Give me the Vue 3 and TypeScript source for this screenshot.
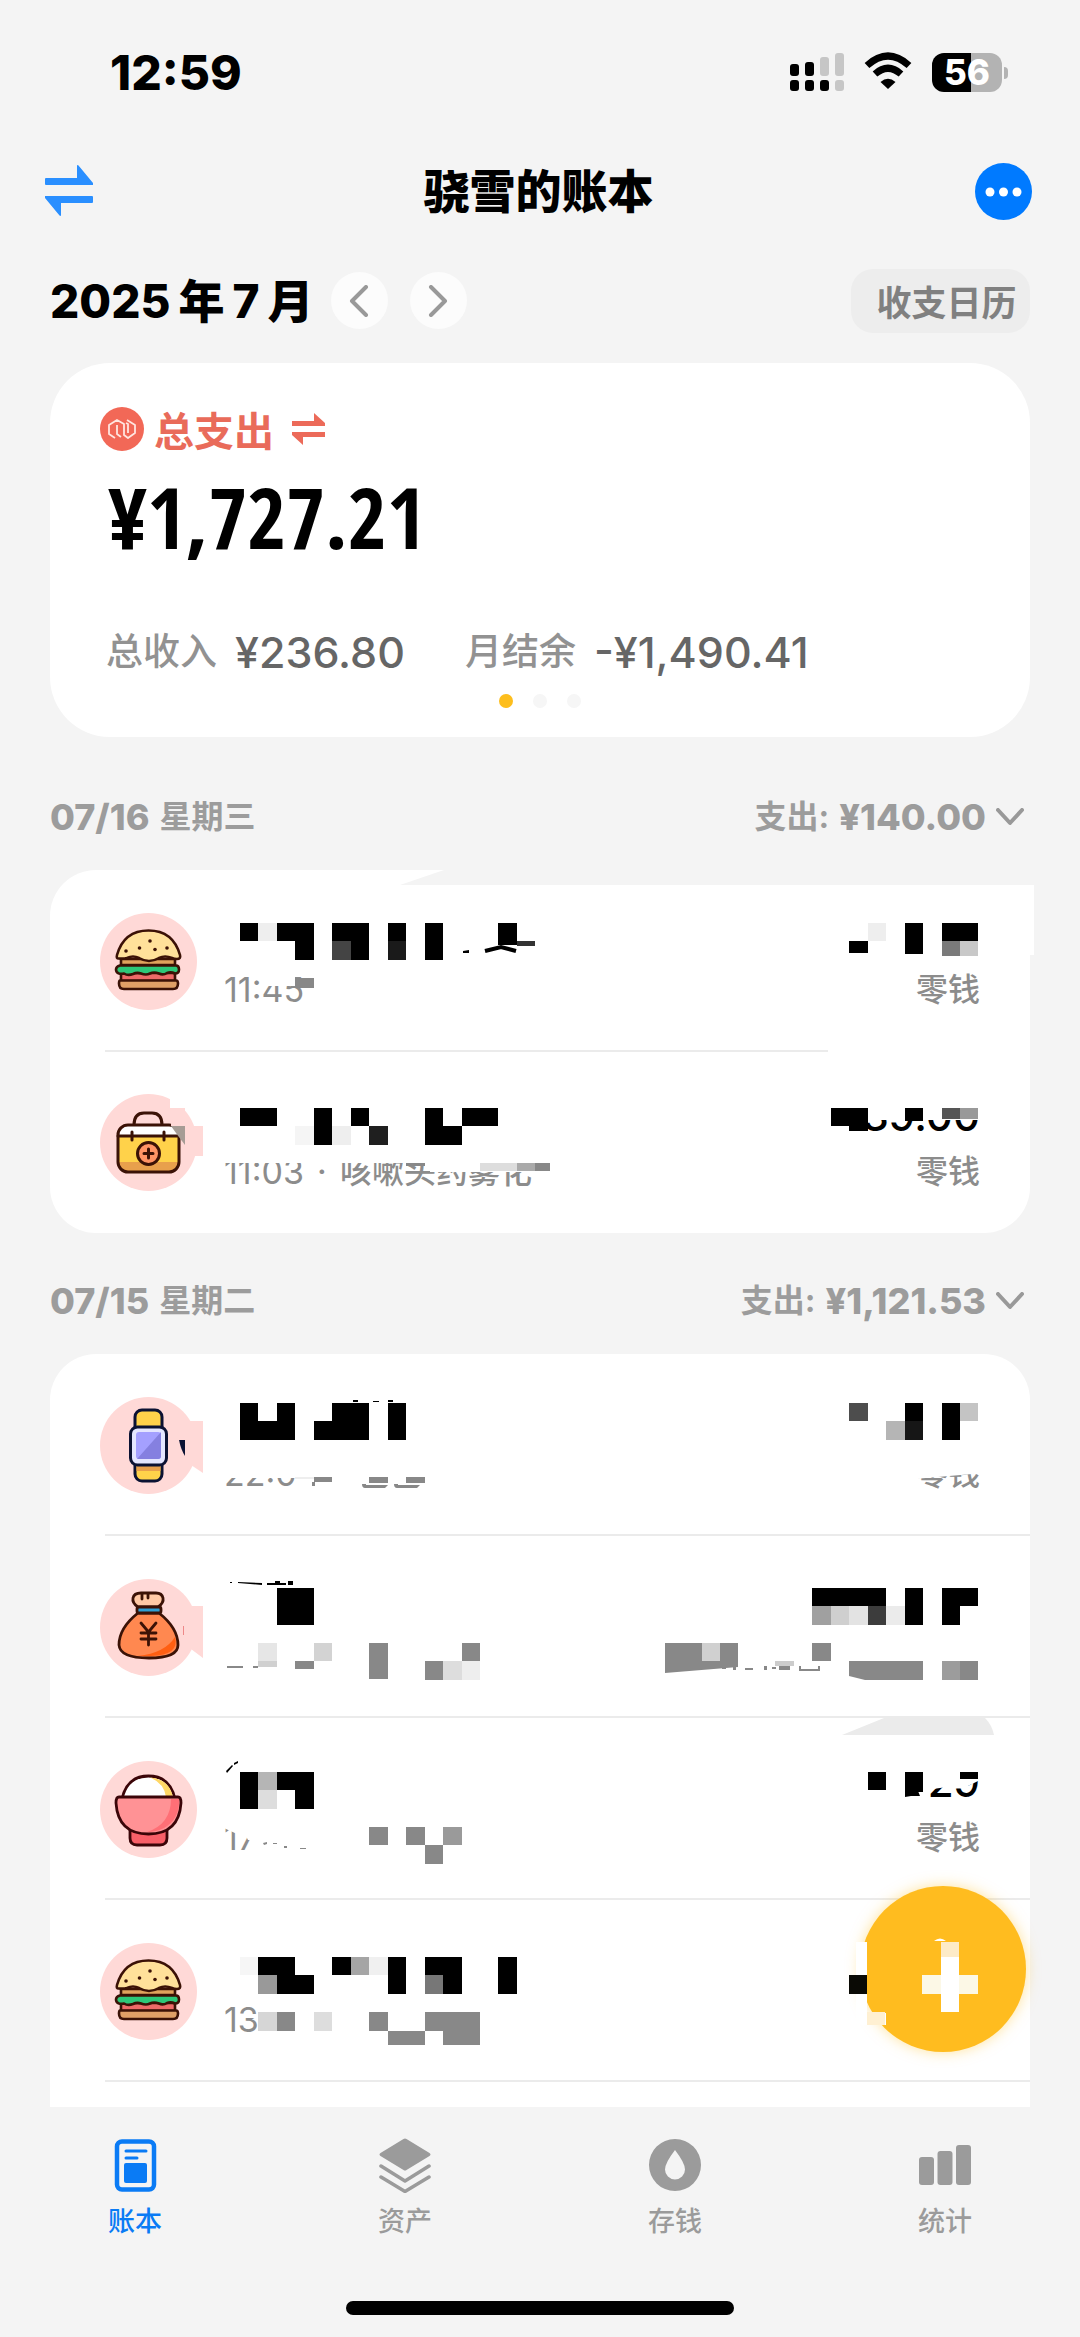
<script setup lang="ts">
import { ref } from 'vue'

type IconName = 'burger' | 'medkit' | 'watch' | 'moneybag' | 'bowl'
/** column, top, columns wide, height, fill */
type Block = [number, number, number, number, string]
/** path data, fill, stroke */
type Mark = { d: string; fill?: string; stroke?: string }

interface Entry {
  icon: IconName
  time?: string
  memo?: string
  amount?: string
  account?: string
  left: Block[]
  right: Block[]
  leftMarks?: Mark[]
  rightMarks?: Mark[]
  leftCover?: string
  rightCover?: string
}

interface DayGroup {
  date: string
  weekday: string
  total: string
  torn?: boolean
  open?: boolean
  entries: Entry[]
}

const K = '#000'
const G = '#888'
const P = '#ffd9d7'

const CELL = 240 / 13
const LEFT_ORIGIN = 50
const RIGHT_ORIGIN = 550

function box(b: Block, origin: number) {
  const x = Math.round(b[0] * CELL)
  return { x: x - origin, y: b[1], width: Math.round((b[0] + b[2]) * CELL) - x, height: b[3], fill: b[4] }
}

const groups: DayGroup[] = [
  {
    date: '07/16',
    weekday: '星期三',
    total: '¥140.00',
    torn: true,
    entries: [
      {
        icon: 'burger',
        time: '11:45',
        account: '零钱',
        leftCover: 'M216 100h29v16h-29z',
        left: [
          [13, 53, 1, 18, K], [14, 53, 1, 18, '#eee'], [15, 53, 2, 18, K], [16, 71, 1, 19, K],
          [18, 53, 2, 18, K], [18, 71, 1, 19, '#444'], [19, 71, 1, 19, K],
          [21, 53, 1, 18, K], [21, 71, 1, 19, '#1a1a1a'], [23, 53, 1, 37, K],
          [27, 53, 1, 22, K], [16, 108, 1, 10, G]
        ],
        leftMarks: [
          { d: 'M467 71h18v5h-18z', fill: '#333' },
          { d: 'M413 81l6-1v3h-6z', fill: K },
          { d: 'M435 81l16-4 15 4', stroke: K }
        ],
        rightCover: 'M278 178h202v6H278z',
        right: [
          [46, 71, 1, 12, K], [47, 53, 1, 18, '#eee'], [49, 53, 1, 31, K],
          [51, 53, 2, 18, K], [51, 71, 1, 15, '#7a7a7a'], [52, 71, 1, 15, '#c8c8c8']
        ]
      },
      {
        icon: 'medkit',
        time: '11:03',
        memo: '咳嗽头药雾化',
        amount: '-39.00',
        account: '零钱',
        leftCover: 'M120 46h16v10h-16zM170 100h210v11H170zM380 96h110v24H380z',
        left: [
          [13, 56, 2, 18, K], [17, 56, 1, 37, K], [16, 74, 1, 19, '#f5f5f5'], [18, 74, 1, 19, '#eee'],
          [19, 56, 1, 18, K], [20, 74, 1, 19, '#1f1f1f'], [23, 56, 1, 18, K], [23, 74, 2, 19, K],
          [25, 56, 2, 18, K], [22, 111, 1, 3, G], [26, 111, 2, 8, '#ddd'],
          [28, 111, 1, 8, '#aaa'], [29, 111, 1, 8, G], [10, 74, 1, 30, P]
        ],
        leftMarks: [
          { d: 'M121 56h14v18h-14z', fill: P },
          { d: 'M121 74h14v19q-7-9-14-19z', fill: '#a69c95' }
        ],
        rightCover: 'M270 40h170v28H270z',
        right: [
          [45, 56, 2, 18, K], [46, 74, 1, 5, K], [49, 56, 1, 13, K],
          [51, 56, 1, 11, '#555'], [52, 56, 1, 11, '#999']
        ]
      }
    ]
  },
  {
    date: '07/15',
    weekday: '星期二',
    total: '¥1,121.53',
    open: true,
    entries: [
      {
        icon: 'watch',
        time: '22:0',
        account: '零钱',
        leftCover: 'M170 96h80v28h-80z',
        left: [
          [13, 49, 1, 18, K], [15, 49, 1, 18, K], [13, 67, 3, 19, K], [17, 67, 1, 19, K],
          [18, 49, 2, 37, K], [21, 49, 1, 37, K], [16, 123, 1, 2, '#eee'], [17, 123, 1, 5, G],
          [20, 123, 1, 6, G], [22, 123, 1, 6, G]
        ],
        leftMarks: [
          { d: 'M135 67h18v52l-12-8h-6z', fill: P },
          { d: 'M129 86h6v16q-4-6-6-16z', fill: '#0b1233' },
          { d: 'M303 46h5v2h-5zM323 47h6v1h-6zM338 46h5v2h-5z', fill: K },
          { d: 'M262 128h3v4h-3zM312 130h4v1h22l-3 3h-20q-3 0-3-4zM344 130h4v1h22l-3 3h-20q-3 0-3-4z', fill: G }
        ],
        rightCover: 'M360 98h74v21l-70 6z',
        right: [
          [46, 49, 1, 18, '#4d4d4d'], [48, 67, 1, 19, '#b5b5b5'], [49, 49, 1, 18, K],
          [49, 67, 1, 19, '#161616'], [51, 49, 1, 37, K], [52, 49, 1, 18, '#c4c4c4']
        ]
      },
      {
        icon: 'moneybag',
        left: [
          [15, 52, 2, 37, K], [14, 107, 1, 18, '#e6e6e6'], [14, 125, 1, 6, '#d0d0d0'],
          [17, 107, 1, 18, '#d3d3d3'], [16, 125, 1, 8, G], [20, 107, 1, 36, G],
          [25, 107, 1, 18, G], [23, 125, 1, 19, G], [24, 125, 1, 19, '#ddd'], [25, 125, 1, 19, '#eee']
        ],
        leftMarks: [
          { d: 'M135 70h18v52l-12-9h-6z', fill: P },
          { d: 'M188 46l24 1v2l-24-2zM217 47h19v2h-19zM225 45h5v3h-5zM238 45h5v4h-5zM180 46h2v1h-2z', fill: K },
          { d: 'M177 130h16v2h-16zM203 130h5v2h-5z', fill: G },
          { d: 'M133 90h1v9h-1z', fill: '#e88' }
        ],
        right: [
          [44, 52, 4, 18, K], [44, 70, 1, 19, '#a0a0a0'], [45, 70, 1, 19, '#cfcfcf'],
          [46, 70, 1, 19, '#e3e3e3'], [47, 70, 1, 19, '#3c3c3c'], [48, 70, 1, 19, '#ebebeb'],
          [49, 52, 1, 37, K], [51, 52, 2, 18, K], [51, 70, 1, 19, K],
          [36, 107, 2, 18, G], [38, 107, 1, 18, '#d0d0d0'], [39, 107, 1, 18, G],
          [44, 107, 1, 18, G], [42, 125, 1, 5, '#ccc'],
          [51, 125, 1, 19, '#9c9c9c'], [52, 125, 1, 19, G]
        ],
        rightMarks: [
          { d: 'M115 125h73v6l-73 6zM299 125h74v19h-58l-16-4z', fill: G },
          { d: 'M172 131h4v2h-4zM183 130h3v4h-3zM195 132h8v2h-8zM214 130h3v4h-3zM222 131h4v2h-4zM229 130h11v4h-11zM249 130h2v3h17v-3h2v5h-21z', fill: G }
        ]
      },
      {
        icon: 'bowl',
        time: '17',
        amount: '29',
        account: '零钱',
        leftCover: 'M176 106h20v14l-20-9zM190 106h26v16h-18z',
        left: [
          [13, 54, 1, 37, K], [14, 54, 1, 18, '#b5b5b5'], [14, 72, 1, 19, '#ddd'],
          [15, 54, 2, 18, K], [16, 72, 1, 19, K], [20, 109, 1, 18, G], [22, 109, 1, 18, G],
          [24, 109, 1, 18, '#9a9a9a'], [23, 127, 1, 19, G]
        ],
        leftMarks: [
          { d: 'M176 53l6-6 1 1-6 7zM184 45l4-2v2l-4 2z', fill: K },
          { d: 'M213 125l4-1v2l-3 1zM223 125h4v1h-4zM234 128h3v2h-3zM250 130h6v1h-6z', fill: G }
        ],
        rightCover: 'M370 42h66v17l-22 11-10-2-28 4z',
        right: [[47, 54, 1, 18, K], [49, 54, 1, 20, K], [52, 54, 1, 7, K]],
        rightMarks: [
          { d: 'M292 17l42-17h101q7 7 9 17z', fill: '#ebebeb' },
          { d: 'M355 73h13l2 5h-9l-6 1z', fill: K }
        ]
      },
      {
        icon: 'burger',
        time: '13',
        leftCover: 'M197 114h12v4h-12z',
        left: [
          [13, 57, 1, 18, '#f6f6f6'], [14, 57, 2, 18, K], [14, 75, 1, 19, '#999'], [15, 75, 2, 19, K],
          [18, 57, 1, 18, K], [19, 57, 1, 18, '#a5a5a5'], [20, 57, 1, 18, '#f0f0f0'], [21, 57, 1, 37, K],
          [23, 57, 2, 18, K], [23, 75, 1, 19, '#777'], [24, 75, 1, 19, K], [27, 57, 1, 37, K],
          [14, 112, 1, 19, '#d6d6d6'], [15, 112, 1, 19, G], [17, 112, 1, 19, '#ddd'],
          [20, 112, 1, 19, G], [21, 131, 2, 14, G], [23, 112, 3, 19, G], [24, 131, 2, 14, G]
        ],
        right: []
      }
    ]
  }
]

const tabs = ['账本', '资产', '存钱', '统计']
const activeTab = ref(0)
const page = ref(0)
</script>

<template>
  <div class="app">
    <header>
      <div class="status">
        <span class="clock">12:59</span>
        <div class="status-icons">
          <svg width="54" height="40" viewBox="0 0 54 40" aria-hidden="true">
            <g fill="#000">
              <rect x="0" y="12" width="9" height="12" rx="3" />
              <rect x="15" y="10" width="9" height="14" rx="3" />
              <rect x="0" y="28" width="9" height="11" rx="3" />
              <rect x="15" y="28" width="9" height="11" rx="3" />
              <rect x="30" y="28" width="9" height="11" rx="3" />
            </g>
            <g fill="#c6c6c6">
              <rect x="30" y="5" width="9" height="19" rx="3" />
              <rect x="45" y="1" width="9" height="23" rx="3" />
              <rect x="45" y="28" width="9" height="11" rx="3" />
            </g>
          </svg>
          <svg width="48" height="40" viewBox="0 0 48 40" aria-hidden="true">
            <path d="M3 13.5Q24-5.500 45 13.500" fill="none" stroke="#000" stroke-width="7" />
            <path d="M11 22Q24 10.500 37 22" fill="none" stroke="#000" stroke-width="7" />
            <path d="M24 37l-7.500-7Q24 23.500 31.500 30z" />
          </svg>
          <div class="battery"><span>56</span></div>
        </div>
      </div>

      <div class="nav">
        <button class="plain" aria-label="切换账本">
          <svg width="48" height="52" viewBox="0 0 48 52" fill="#2a8fff" aria-hidden="true">
            <path d="M1 13h31V1q0-1.500 1.500-.5L48 18v2H1q-1 0-1-1v-5q0-1 1-1zM47 38H16v12q0 1.500-1.500.5L0 33v-2h47q1 0 1 1v5q0 1-1 1z" />
          </svg>
        </button>
        <h1>骁雪的账本</h1>
        <button class="more" aria-label="更多">
          <svg width="57" height="57" viewBox="0 0 57 57" aria-hidden="true">
            <circle cx="28.500" cy="28.500" r="28.500" fill="#007aff" />
            <g fill="#fff"><circle cx="15" cy="29" r="4.500" /><circle cx="28.500" cy="29" r="4.500" /><circle cx="42" cy="29" r="4.500" /></g>
          </svg>
        </button>
      </div>

      <div class="month">
        <h2><span>2025</span><span>年</span><span>7</span><span>月</span></h2>
        <button class="step" aria-label="上个月">
          <svg width="20" height="32" viewBox="0 0 20 32" aria-hidden="true"><path d="M17 2L3 16l14 14" /></svg>
        </button>
        <button class="step" aria-label="下个月">
          <svg width="20" height="32" viewBox="0 0 20 32" aria-hidden="true"><path d="M3 2l14 14L3 30" /></svg>
        </button>
        <button class="calendar">收支日历</button>
      </div>
    </header>

    <main>
      <section class="summary">
        <div class="kind">
          <svg width="44" height="44" viewBox="0 0 44 44" aria-hidden="true">
            <circle cx="22" cy="22" r="22" fill="#f26857" />
            <path d="M15 31L9 27V18L17 13l7 4v11l4 3 7-5v-8l-8-5M17 18v9l4 3M28 26v-9l-2-1" fill="none" stroke="#ffe5df" stroke-width="1.800" stroke-linejoin="round" />
          </svg>
          <span>总支出</span>
          <svg class="swap" width="33" height="32" viewBox="0 0 33 32" fill="#ec6a59" aria-hidden="true">
            <path d="M0 8h22V0l11 10v3H0zM33 24H11v8L0 22v-3h33z" />
          </svg>
        </div>
        <p class="sum">¥1,727.21</p>
        <dl>
          <div><dt>总收入</dt><dd>¥236.80</dd></div>
          <div><dt>月结余</dt><dd>-¥1,490.41</dd></div>
        </dl>
        <div class="dots">
          <button v-for="n in 3" :key="n" :class="{ on: page === n - 1 }" :aria-label="`第${n}页`" @click="page = n - 1"></button>
        </div>
      </section>

      <section v-for="g in groups" :key="g.date" class="day">
        <div class="day-head">
          <h3><span class="num">{{ g.date }}</span><span>{{ g.weekday }}</span></h3>
          <button class="total">
            <span>支出:</span><span class="num">{{ g.total }}</span>
            <svg width="28" height="18" viewBox="0 0 28 18" aria-hidden="true"><path d="M2 2l12 13L26 2" /></svg>
          </button>
        </div>
        <ul :class="{ torn: g.torn, open: g.open }">
          <li v-for="(e, i) in g.entries" :key="i">
            <svg class="badge" viewBox="0 0 97 97" aria-hidden="true">
              <circle cx="48.500" cy="48.500" r="48.500" fill="#ffd9d7" />
              <g v-if="e.icon === 'burger'" stroke="#3b1206" stroke-width="2.600" stroke-linejoin="round">
                <path d="M21 46h54v6H21z" fill="#e0a35c" />
                <path d="M21 60h54v8H21z" fill="#ee6a68" />
                <path d="M20 52.500h56q3 0 3 4t-4 4q-4-2-8-.5-4 2.500-8 .5-5-2-9 0t-9 0q-4-1.500-8 .5-5 2-9-.5-3 .5-5 0-3-1-3-4t4-4z" fill="#2dc878" />
                <path d="M20 67.500h56q2 0 2 3 0 5.500-5 5.500H24q-5 0-5-5.500 0-3 1-3z" fill="#e0a066" />
                <path d="M19 45.500Q16 46 17 42 24 17.500 48.500 17.500T80 42q1 4-3 4-3 0-5-1-7-3-13 0-10 6-20 0-6-3-12 0-3 1-8 .5z" fill="#ffe19a" />
                <g fill="#3b1206" stroke="none"><circle cx="50" cy="28" r="1.800" /><circle cx="39.500" cy="35" r="1.800" /><circle cx="55" cy="36.500" r="1.800" /><circle cx="67" cy="35" r="1.800" /><circle cx="26" cy="38" r="1.800" /></g>
              </g>
              <g v-else-if="e.icon === 'medkit'" stroke="#3b1206" stroke-width="3" fill="none" stroke-linecap="round">
                <path d="M34 31q0-12 10-12h8q10 0 10 12" />
                <rect x="18" y="31" width="61" height="47" rx="10" fill="#ffd24a" stroke="none" />
                <path d="M18 68h61q0 10-10 10H28q-10 0-10-10z" fill="#e8a04c" stroke="none" />
                <path d="M18 42q0-11 10-11h41q10 0 10 11z" fill="#fff" stroke="none" />
                <path d="M18 42h61M32 38v8M64 38v8" />
                <rect x="18" y="31" width="61" height="47" rx="10" />
                <circle cx="48.500" cy="59.500" r="11" fill="#ff9465" />
                <path d="M48.500 55v9M44 59.500h9" />
              </g>
              <g v-else-if="e.icon === 'watch'" stroke="#0b1233" stroke-width="3">
                <rect x="35" y="13" width="27" height="28" rx="7" fill="#ffd24a" />
                <rect x="35" y="56" width="27" height="28" rx="7" fill="#ffd24a" />
                <path d="M36.500 68h24v6h-24z" fill="#e8a04c" stroke="none" />
                <rect x="30.500" y="30" width="36" height="38" rx="7" fill="#e4e6ff" />
                <rect x="36" y="35" width="25" height="27" rx="3" fill="#a4a0ff" stroke="none" />
                <path d="M61 35v24q0 3-3 3H37z" fill="#8580e0" stroke="none" />
              </g>
              <g v-else-if="e.icon === 'moneybag'" stroke="#3b1206" stroke-width="2.800" stroke-linecap="round" stroke-linejoin="round">
                <path d="M38 28q-6-4-5-9 1-5 8-5h15q6 0 7 5t-5 9z" fill="#ffc9a5" />
                <path d="M42 15v5M48 15v4" />
                <path d="M38 34h21q19 15 19 32 0 13-29 13T19 66q0-17 19-32z" fill="#ff8850" />
                <path d="M75 58q5 18-24 19H38q27-3 37-19z" fill="#ff5f12" stroke="none" />
                <rect x="37" y="28" width="24" height="6" rx="2" fill="#2d9ed2" />
                <path d="M41 44l7.500 9 7.500-9M41 54h15M41 60h15M48.500 53v13" fill="none" />
              </g>
              <g v-else stroke="#3b0508" stroke-width="2.800" stroke-linejoin="round">
                <path d="M22 38Q27 15 48.500 15T75 38z" fill="#fff" />
                <path d="M50 16.500Q69 18 73 36h-7Q64 22 50 16.500z" fill="#ffd766" stroke="none" />
                <path d="M30 66h37v11q0 7-7 7H37q-7 0-7-7z" fill="#f95f68" />
                <path d="M19 36h59q3 0 3 6-2 31-32.500 31T16 42q0-6 3-6z" fill="#ff9295" />
                <path d="M71 38h8q1 20-15 29-8 4-17 4 24-8 24-33z" fill="#ff6f76" stroke="none" />
              </g>
            </svg>
            <div class="info">
              <span class="top"></span>
              <span class="note">
                <span class="time">{{ e.time }}</span>
                <template v-if="e.memo"><span class="dot">·</span>{{ e.memo }}</template>
              </span>
            </div>
            <div class="info end"><span class="top">{{ e.amount }}</span><span class="note">{{ e.account }}</span></div>
            <svg class="mask start" width="500" height="182" viewBox="0 0 500 182" aria-hidden="true">
              <path v-if="e.leftCover" :d="e.leftCover" fill="#fff" />
              <rect v-for="(b, n) in e.left" :key="n" v-bind="box(b, LEFT_ORIGIN)" />
              <path v-for="(m, n) in e.leftMarks" :key="'m' + n" :d="m.d" :fill="m.fill ?? 'none'" :stroke="m.stroke ?? 'none'" stroke-width="4" />
            </svg>
            <svg class="mask finish" width="480" height="182" viewBox="0 0 480 182" aria-hidden="true">
              <path v-if="e.rightCover" :d="e.rightCover" fill="#fff" />
              <rect v-for="(b, n) in e.right" :key="n" v-bind="box(b, RIGHT_ORIGIN)" />
              <path v-for="(m, n) in e.rightMarks" :key="'m' + n" :d="m.d" :fill="m.fill ?? 'none'" :stroke="m.stroke ?? 'none'" stroke-width="4" />
            </svg>
          </li>
        </ul>
      </section>

      <button class="add" aria-label="记一笔">
        <svg width="166" height="166" viewBox="0 0 166 166" aria-hidden="true">
          <path d="M-4 56H7v71h19v12H-4z" fill="#fff" />
          <path d="M-11 89H7v19h-18z" fill="#0a0a05" />
          <path d="M7 126h18v13H7z" fill="#fff0d2" />
          <path d="M74 55q6-5 12 0z" fill="#fff" />
          <path d="M81 56h18v70H81z" fill="#fff" />
          <path d="M81 56h18v15H81z" fill="#fdebc8" />
          <path d="M62 89h19v19H62zM99 89h19v19H99z" fill="#fcf8e6" />
        </svg>
      </button>
    </main>

    <footer>
      <nav>
        <button v-for="(t, i) in tabs" :key="t" :class="{ active: activeTab === i }" @click="activeTab = i">
          <svg width="56" height="56" viewBox="0 0 56 56" fill="currentColor" aria-hidden="true">
            <template v-if="i === 0">
              <rect x="10" y="4.500" width="37" height="48" rx="5" fill="none" stroke="currentColor" stroke-width="4.500" />
              <rect x="17" y="26" width="23" height="20" rx="2" />
              <path d="M19 14h20M19 21h11" stroke="currentColor" stroke-width="3" stroke-linecap="round" />
            </template>
            <template v-else-if="i === 1">
              <path d="M26.500 2q1.500-1 3 0l23 14q2 1.500 0 3l-23 14q-1.500 1-3 0l-23-14q-2-1.500 0-3z" />
              <path d="M4 29l24 15 24-15M4 40l24 14.500L52 40" fill="none" stroke="currentColor" stroke-width="3.500" stroke-linecap="round" stroke-linejoin="round" />
            </template>
            <path v-else-if="i === 2" fill-rule="evenodd" d="M28 2a26 26 0 1 1 0 52 26 26 0 1 1 0-52zM28 13Q18 26 18 32.500a10 10 0 0 0 20 0Q38 26 28 13z" />
            <template v-else>
              <rect x="2" y="20" width="15" height="28" rx="3" />
              <rect x="20.500" y="14" width="15" height="34" rx="3" />
              <rect x="39" y="8" width="15" height="40" rx="3" />
            </template>
          </svg>
          {{ t }}
        </button>
      </nav>
      <div class="home"></div>
    </footer>
  </div>
</template>

<style>
body {
  margin: 0;
  background: #f4f4f4;
}
</style>

<style scoped>
* {
  box-sizing: border-box;
}
.app {
  display: flex;
  flex-direction: column;
  min-height: 100vh;
  overflow: hidden;
  background: #f4f4f4;
  color: #000;
  font-family: Inter, "Noto Sans CJK SC", sans-serif;
}
h1, h2, h3, p, dl, dd, ul {
  margin: 0;
  padding: 0;
}
button {
  padding: 0;
  border: 0;
  background: none;
  color: inherit;
  font: inherit;
  cursor: pointer;
}
svg {
  display: block;
  flex: none;
}
.status {
  display: flex;
  align-items: center;
  justify-content: space-between;
  height: 144px;
  padding: 0 72px 0 110px;
}
.clock {
  font-size: 48px;
  font-weight: 800;
}
.status-icons {
  display: flex;
  align-items: center;
  gap: 20px;
}
.battery {
  position: relative;
  width: 70px;
  height: 39px;
  margin-right: 6px;
  border-radius: 12px;
  background: linear-gradient(90deg, #000 56%, #b3b3b3 56%);
  color: #fff;
  font-size: 35px;
  font-weight: 800;
  line-height: 39px;
  text-align: center;
}
.battery::after {
  content: "";
  position: absolute;
  top: 14px;
  right: -6px;
  width: 4px;
  height: 12px;
  border-radius: 0 4px 4px 0;
  background: #b3b3b3;
}
.nav {
  display: grid;
  grid-template-columns: 1fr auto 1fr;
  align-items: center;
  height: 94px;
  padding: 0 48px 0 45px;
}
.nav button {
  justify-self: start;
}
.nav .more {
  justify-self: end;
}
h1 {
  font-size: 46px;
  font-weight: 800;
  line-height: 60px;
}
.month {
  display: flex;
  align-items: center;
  height: 125px;
  padding: 0 50px;
}
h2 {
  display: flex;
  gap: 8px;
  margin-right: 17px;
  font-size: 46px;
  font-weight: 800;
  line-height: 60px;
}
.step {
  display: flex;
  align-items: center;
  justify-content: center;
  width: 57px;
  height: 57px;
  margin-right: 22px;
  border-radius: 50%;
  background: #fcfcfc;
}
.step svg, .total svg {
  fill: none;
  stroke: #999;
  stroke-width: 4px;
  stroke-linecap: round;
  stroke-linejoin: round;
}
.calendar {
  width: 179px;
  height: 64px;
  margin-left: auto;
  padding-left: 12px;
  border-radius: 22px;
  background: #ededed;
  color: #808080;
  font-size: 35px;
  font-weight: 700;
}
main {
  position: relative;
  flex: 1;
  padding: 0 50px;
}
.summary {
  height: 374px;
  padding: 44px 50px 0;
  border-radius: 60px;
  background: #fff;
}
.kind {
  display: flex;
  align-items: center;
  height: 44px;
  gap: 10px;
  color: #e96b5a;
  font-size: 40px;
  font-weight: 700;
}
.swap {
  margin-left: 8px;
}
.sum {
  margin-top: 16px;
  padding-left: 8px;
  font-family: "Noto Sans ExtraCondensed", "Open Sans Condensed", "Roboto Condensed", "Liberation Sans Narrow", sans-serif;
  font-size: 84px;
  font-weight: 700;
  line-height: 100px;
}
dl {
  display: flex;
  gap: 60px;
  margin-top: 60px;
  padding-left: 6px;
  line-height: 50px;
}
dl div {
  display: flex;
  align-items: center;
  gap: 18px;
}
dt {
  color: #929292;
  font-size: 37px;
  font-weight: 500;
}
dd {
  color: #666;
  font-size: 43px;
  font-weight: 500;
}
.dots {
  display: flex;
  justify-content: center;
  gap: 20px;
  margin-top: 17px;
}
.dots button {
  width: 14px;
  height: 14px;
  border-radius: 50%;
  background: #f6f6f6;
}
.dots .on {
  background: #fdbe1d;
}
.day {
  padding-top: 44px;
}
.summary + .day {
  padding-top: 56px;
}
.day-head {
  display: flex;
  align-items: center;
  justify-content: space-between;
  height: 48px;
  margin-bottom: 29px;
  color: #9c9c9c;
}
h3, .total {
  display: flex;
  align-items: center;
  gap: 10px;
  height: 48px;
  font-size: 32px;
  font-weight: 700;
  line-height: 48px;
}
.total {
  padding-right: 6px;
}
.num {
  font-size: 36px;
  font-weight: 800;
}
ul {
  position: relative;
  list-style: none;
  border-radius: 46px;
  background: #fff;
}
.open {
  padding-bottom: 25px;
  border-radius: 46px 46px 0 0;
}
li {
  position: relative;
  display: flex;
  align-items: center;
  height: 182px;
  padding: 0 50px;
}
li::after {
  content: "";
  position: absolute;
  right: 0;
  bottom: 0;
  left: 55px;
  height: 2px;
  background: #ebebeb;
}
.torn li:last-child {
  height: 181px;
}
.torn li:last-child::after {
  display: none;
}
.torn::before {
  content: "";
  position: absolute;
  z-index: 2;
  top: 0;
  right: -4px;
  left: 350px;
  height: 15px;
  background: #f4f4f4;
  clip-path: polygon(44px 0, 100% 0, 100% 100%, 0 100%);
}
.torn::after {
  content: "";
  position: absolute;
  top: 15px;
  right: -4px;
  width: 60px;
  height: 70px;
  background: #fff;
}
.badge {
  width: 97px;
  height: 97px;
}
.info {
  display: flex;
  flex: 1;
  flex-direction: column;
  gap: 8px;
  margin-left: 27px;
}
.end {
  flex: none;
  align-items: flex-end;
}
.top {
  height: 48px;
  font-size: 42px;
  font-weight: 500;
  line-height: 44px;
}
.note {
  display: flex;
  height: 42px;
  color: #8c8c8c;
  font-size: 32px;
  font-weight: 500;
  line-height: 44px;
  white-space: nowrap;
}
.time {
  font-size: 34px;
  font-weight: 400;
}
.dot {
  width: 36px;
  text-align: center;
}
.mask {
  position: absolute;
  z-index: 1;
  top: 0;
  pointer-events: none;
}
.start {
  left: 0;
}
.finish {
  right: 0;
}
.add {
  position: absolute;
  z-index: 3;
  right: 54px;
  bottom: 55px;
  width: 166px;
  height: 166px;
  border-radius: 50%;
  background: #ffbc1f;
  box-shadow: 0 0 14px rgba(255, 200, 60, 0.5);
}
.add svg {
  overflow: visible;
}
footer {
  height: 230px;
  padding-top: 30px;
}
nav {
  display: grid;
  grid-template-columns: repeat(4, 1fr);
}
nav button {
  display: flex;
  flex-direction: column;
  align-items: center;
  gap: 11px;
  color: #9b9b9b;
  font-size: 27px;
  font-weight: 500;
  line-height: 36px;
}
nav .active {
  color: #0a7bf5;
}
.home {
  width: 36%;
  height: 14px;
  margin: 61px auto 0;
  border-radius: 7px;
  background: #000;
}
</style>
